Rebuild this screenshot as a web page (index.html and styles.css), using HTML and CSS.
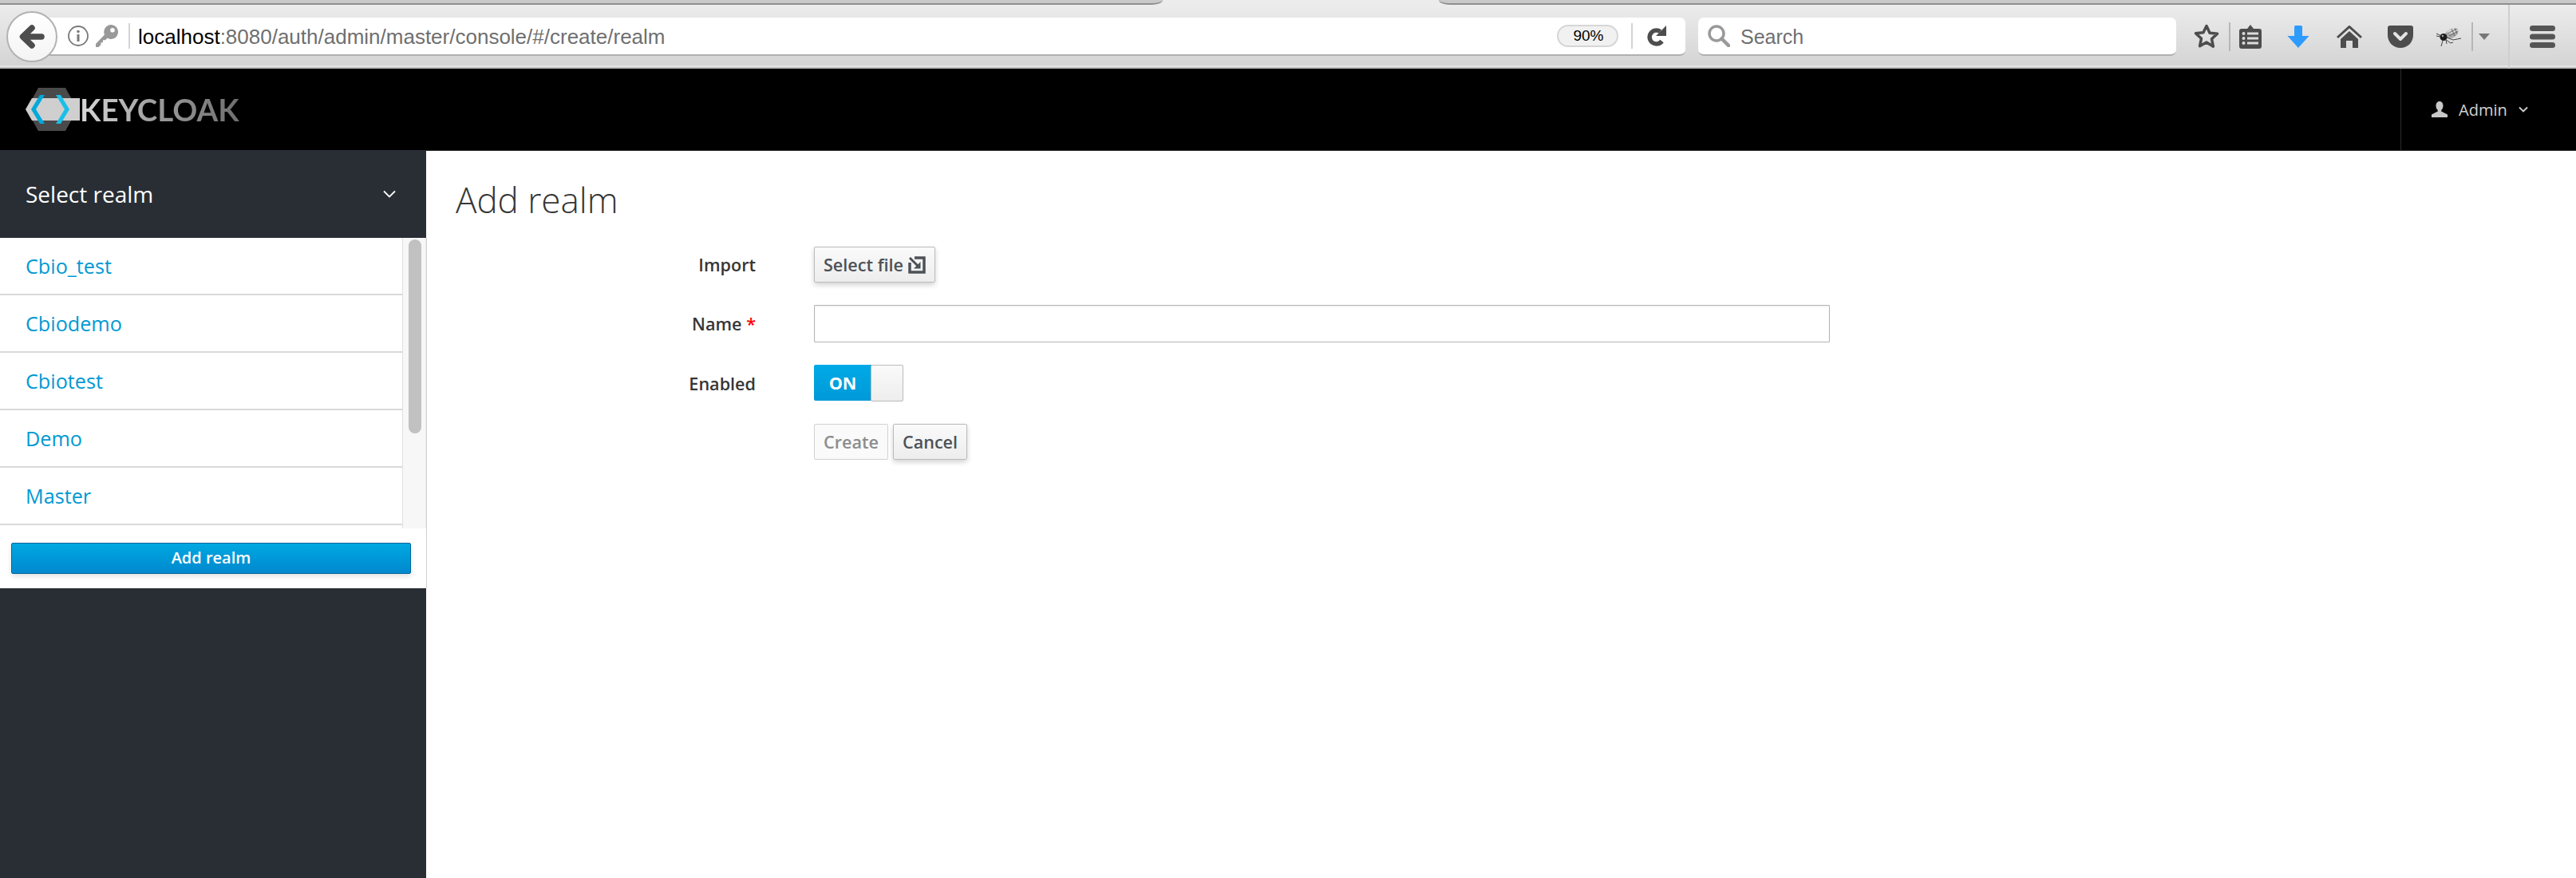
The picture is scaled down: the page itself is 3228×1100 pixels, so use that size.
FILE: index.html
```html
<!DOCTYPE html>
<html lang="en">
<head>
<meta charset="utf-8">
<title>Keycloak - Add realm</title>
<link rel="stylesheet" href="styles.css">
</head>
<body>
<div class="app">
  <div class="tabstrip"><div class="tab tab-left"></div><div class="tab tab-right"></div></div>
  <div class="toolbar">
    <div class="back"><svg width="60" height="60" viewBox="2 2 60 60"><path d="M44 32H24M32 21 20.500 32 32 43" fill="none" stroke="#4d4d4d" stroke-width="7.500" stroke-linecap="round" stroke-linejoin="round"/></svg></div>
    <div class="urlbar">
      <svg class="i-info" width="26" height="26" viewBox="0 0 26 26"><circle cx="13" cy="13" r="12" fill="none" stroke="#7a7a7a" stroke-width="1.800"/><circle cx="13" cy="7.500" r="1.800" fill="#7a7a7a"/><rect x="11.500" y="11" width="3" height="9" fill="#7a7a7a"/></svg>
      <svg class="i-key" width="28" height="28" viewBox="0 0 28 28"><path d="M19 0a9 9 0 1 1-4.500 16.800L12 19.300H9v3H6.500V25L3.500 28H0v-4L11 12.600A9 9 0 0 1 19 0zm2 4a2.800 2.800 0 1 0 0 5.600 2.800 2.800 0 0 0 0-5.600z" fill="#999" fill-rule="evenodd"/></svg>
      <span class="url-sep"></span>
      <span class="url-text"><span class="url-host">localhost</span>:8080/auth/admin/master/console/#/create/realm</span>
      <span class="zoom-badge">90%</span>
      <span class="url-sep sep-right"></span>
      <svg class="i-reload" width="26" height="26" viewBox="0 0 26 26"><path d="M16.500 7.500A8.500 8.500 0 1 0 18.500 19.500" fill="none" stroke="#4d4d4d" stroke-width="5.500"/><path d="M24 0v13H11z" fill="#4d4d4d"/></svg>
    </div>
    <div class="searchbar">
      <svg width="28" height="28" viewBox="0 0 28 28"><circle cx="11" cy="11" r="9" fill="none" stroke="#999" stroke-width="3.500"/><path d="M17.500 17.500 26 26" stroke="#999" stroke-width="4.500" stroke-linecap="round"/></svg>
      <span class="search-text">Search</span>
    </div>
    <svg class="tb-star" width="32" height="32" viewBox="0 0 32 32"><path d="M16 2.500l4 8.700 9.500 1.100-7 6.500 1.900 9.400L16 23l-8.400 4.700 1.900-9.400-7-6.500 9.500-1.100z" fill="none" stroke="#4d4d4d" stroke-width="3.500" stroke-linejoin="round"/></svg>
    <span class="tb-sep sep-star"></span>
    <svg class="tb-library" width="28" height="30" viewBox="0 0 28 30"><path d="M3 5h7l4-5 4 5h7a3 3 0 0 1 3 3v19a3 3 0 0 1-3 3H3a3 3 0 0 1-3-3V8a3 3 0 0 1 3-3z" fill="#4d4d4d"/><path d="M10 9.500h14v3H10zM10 15.500h14v3H10zM10 21.500h14v3H10z" fill="#dcdcdc"/><circle cx="5.500" cy="11" r="2" fill="#dcdcdc"/><circle cx="5.500" cy="17" r="2" fill="#dcdcdc"/><circle cx="5.500" cy="23" r="2" fill="#dcdcdc"/></svg>
    <svg class="tb-download" width="28" height="28" viewBox="0 0 28 28"><path d="M9 1.500A1.500 1.500 0 0 1 10.500 0h7A1.500 1.500 0 0 1 19 1.500V13h8.500L14 28 .5 13H9z" fill="#2e9bff"/></svg>
    <svg class="tb-home" width="32" height="28" viewBox="0 0 32 28"><path d="M1 15 16 1.500 31 15" fill="none" stroke="#4d4d4d" stroke-width="3"/><path d="M16 7 27 17v11h-7v-9h-8v9H5V17z" fill="#4d4d4d"/></svg>
    <svg class="tb-pocket" width="32" height="28" viewBox="0 0 32 28"><path d="M3 0h26a3 3 0 0 1 3 3v9c0 9-7 16-16 16S0 21 0 12V3a3 3 0 0 1 3-3z" fill="#4d4d4d"/><path d="M9 10l7 7 7-7" fill="none" stroke="#e4e4e4" stroke-width="4" stroke-linecap="round" stroke-linejoin="round"/></svg>
    <svg class="tb-bug" width="32" height="26" viewBox="0 0 32 26"><ellipse cx="19" cy="9" rx="9" ry="5.500" fill="#a8a8a8" transform="rotate(-25 19 9)"/><ellipse cx="21" cy="6" rx="8" ry="3" fill="#d4d4d4" transform="rotate(-10 21 6)"/><path d="M14 9 26 3M16 12 27 6M19 3l4 9M23 2l3 7" stroke="#555" stroke-width=".8" fill="none"/><ellipse cx="9" cy="13.500" rx="4.500" ry="4.500" fill="#1c1c1c"/><circle cx="8" cy="12" r="1.200" fill="#aaa"/><path d="M0 9 6 12M0 12l5 1M8 18 6 25M12 17l1 5M13 14l8 3 10-2M11 16l7 5 3-1" fill="none" stroke="#333" stroke-width=".9"/></svg>
    <span class="tb-sep sep-bug"></span>
    <svg class="tb-caret" width="14" height="8" viewBox="0 0 14 8"><path d="M0 0h14L7 8z" fill="#777"/></svg>
    <span class="tb-divider"></span>
    <svg class="tb-menu" width="32" height="28" viewBox="0 0 32 28"><rect y="0" width="32" height="7" rx="3.500" fill="#555"/><rect y="10.500" width="32" height="7" rx="3.500" fill="#555"/><rect y="21" width="32" height="7" rx="3.500" fill="#555"/></svg>
  </div>
  <header class="topnav">
    <div class="logo">
      <svg class="logo-mark" width="68" height="54" viewBox="0 0 68 54"><path d="M16 0H50L65 27 50 54H16L1 27z" fill="#4a4a4a"/><path d="M0 27 8 13H68V41H8z" fill="#cfcfcf"/><path d="M24 9 13 27 24 45h-6L7 27 18 9z" fill="#00a9d8"/><path d="M38 9h6L55 27 44 45h-6L49 27z" fill="#19bfe8"/></svg>
      <span class="logo-text">KEYCLOAK</span>
    </div>
    <div class="user">
      <svg width="20" height="20" viewBox="0 0 20 20"><path d="M10 0c3 0 4.500 2.500 4.500 5.500 0 2.300-1 4.300-2.300 5.400v1.700L20 16.500V20H0v-3.500l7.800-3.900v-1.700C6.500 9.800 5.500 7.800 5.500 5.500 5.500 2.500 7 0 10 0z" fill="#c8c8c8"/></svg>
      <span class="user-name">Admin</span>
      <svg width="12" height="8" viewBox="0 0 12 8"><path d="M1 1.500 6 6.500 11 1.500" fill="none" stroke="#d1d1d1" stroke-width="1.800"/></svg>
    </div>
  </header>
  <div class="main">
    <aside class="sidebar">
      <div class="realm-head">
        <span>Select realm</span>
        <svg width="16" height="10" viewBox="0 0 16 10"><path d="M1 1.500 8 8.500 15 1.500" fill="none" stroke="#fff" stroke-width="1.800"/></svg>
      </div>
      <div class="realm-panel">
        <div class="realm-scroll">
          <ul class="realm-list">
            <li><a href="#">Cbio_test</a></li>
            <li><a href="#">Cbiodemo</a></li>
            <li><a href="#">Cbiotest</a></li>
            <li><a href="#">Demo</a></li>
            <li><a href="#">Master</a></li>
          </ul>
          <div class="scrolltrack"><div class="scrollthumb"></div></div>
        </div>
        <div class="add-wrap"><button class="btn-primary" type="button">Add realm</button></div>
      </div>
    </aside>
    <main class="content">
      <h1>Add realm</h1>
      <form class="form">
        <label class="form-label">Import</label>
        <div class="form-field"><button class="btn" type="button">Select file <svg class="file-icon" width="22" height="22" viewBox="0 0 22 22"><path d="M8 2H20V20H2V8" fill="none" stroke="#4d5258" stroke-width="3.500"/><path d="M2 2 13.500 13.500" stroke="#4d5258" stroke-width="3"/><path d="M15.500 7V15.500H7z" fill="#4d5258"/></svg></button></div>
        <label class="form-label">Name <span class="req">*</span></label>
        <div class="form-field"><input class="input" type="text" aria-label="Name"></div>
        <label class="form-label">Enabled</label>
        <div class="form-field"><div class="toggle"><span class="toggle-on">ON</span><span class="toggle-handle"></span></div></div>
        <div class="form-actions">
          <button class="btn btn-disabled" type="button">Create</button>
          <button class="btn" type="button">Cancel</button>
        </div>
      </form>
    </main>
  </div>
</div>
</body>
</html>
```
FILE: styles.css
```css
* { box-sizing: border-box; }
html, body { margin: 0; padding: 0; }
body { background: #fff; font-family: "Open Sans", "Noto Sans", sans-serif; color: #363636; }
svg { display: block; flex: none; }
.app { height: 1100px; display: flex; flex-direction: column; overflow: hidden; }

.tabstrip { height: 6px; display: flex; justify-content: space-between; background: #ececec; flex: none; }
.tab { height: 6px; background: #c9c9c9; border-bottom: 2px solid #8f8f8f; }
.tab-left { width: 1457px; border-bottom-right-radius: 14px 6px; }
.tab-right { width: 1425px; border-bottom-left-radius: 14px 6px; }

.toolbar { height: 80px; flex: none; display: flex; align-items: center; padding-left: 8px;
  background: linear-gradient(#ececec, #d3d3d3);
  box-shadow: inset 0 -2px 0 #bdbdbd, inset 0 -4px 0 #e4e4e4; }
.back { width: 64px; height: 64px; border-radius: 50%; background: linear-gradient(#fff, #f4f4f4); border: 2px solid #b2b2b2; position: relative; z-index: 1; flex: none; }
.urlbar { width: 2052px; height: 48px; margin-left: -12px; background: #fff; border-bottom: 2px solid #b0b0b0; border-radius: 0 7px 7px 0; display: flex; align-items: center; flex: none; }
.i-info { margin-left: 25px; }
.i-key { margin-left: 9px; }
.url-sep { width: 2px; height: 32px; background: #d4d4d4; margin-left: 13px; flex: none; }
.url-text { margin-left: 10px; padding-top: 2px; font-family: "Liberation Sans", Arial, sans-serif; font-size: 26px; color: #6f6f6f; white-space: nowrap; }
.url-host { color: #000; }
.zoom-badge { margin-left: auto; width: 77px; height: 28px; padding-left: 2px; border-radius: 14px; background: #f1f1f1; border: 2px solid #d6d6d6; font-family: "Liberation Sans", Arial, sans-serif; font-size: 19px; color: #000; display: flex; align-items: center; justify-content: center; }
.sep-right { margin-left: 16px; }
.i-reload { margin-left: 18px; margin-right: 22px; }
.searchbar { width: 599px; height: 48px; margin-left: 16px; background: #fff; border-bottom: 2px solid #b0b0b0; border-radius: 7px; display: flex; align-items: center; padding-left: 12px; flex: none; }
.search-text { margin-left: 13px; padding-top: 3px; font-family: "Liberation Sans", Arial, sans-serif; font-size: 25px; color: #6f6f6f; }
.tb-star { margin-left: 22px; }
.tb-sep { width: 2px; height: 36px; background: #b6b6b6; flex: none; }
.sep-star { margin-left: 12px; }
.tb-library { margin-left: 11px; }
.tb-download { margin-left: 32px; }
.tb-home { margin-left: 34px; }
.tb-pocket { margin-left: 32px; }
.tb-bug { margin-left: 29px; }
.sep-bug { margin-left: 12px; }
.tb-caret { margin-left: 7px; }
.tb-divider { width: 2px; height: 80px; margin-left: 23px; background: #cfcfcf; flex: none; }
.tb-menu { margin-left: 25px; }

.topnav { height: 102px; flex: none; background: #000; display: flex; align-items: center; justify-content: space-between; padding-left: 32px; }
.logo { display: flex; align-items: center; filter: blur(.6px); }
.logo-text { font-family: "Lato", "Open Sans", sans-serif; font-weight: 700; font-size: 38.500px; line-height: 40px; background: linear-gradient(90deg, #d8d8d8, #9a9a9a 50%, #6e6e6e); -webkit-background-clip: text; background-clip: text; color: transparent; }
.user { width: 220px; height: 102px; border-left: 1px solid #2b2b2b; padding-left: 38px; display: flex; align-items: center; color: #d1d1d1; }
.user-name { margin-left: 14px; margin-right: 14px; font-size: 20px; }

.main { flex: 1; display: flex; min-height: 0; }
.sidebar { width: 534px; flex: none; background: #292e34; }
.realm-head { height: 110px; display: flex; align-items: center; justify-content: space-between; padding: 0 38px 0 32px; color: #fff; font-size: 28px; }
.realm-panel { background: #fff; box-shadow: 1px 0 0 #d1d1d1; }
.realm-scroll { height: 364px; display: flex; overflow: hidden; }
.realm-list { width: 505px; margin: 0; padding: 0; list-style: none; border-right: 1px solid #e0e0e0; }
.realm-list li { height: 72px; border-bottom: 2px solid #d9d9d9; display: flex; align-items: center; padding-left: 32px; font-size: 25.200px; }
.realm-list a { color: #0099d3; text-decoration: none; }
.scrolltrack { flex: 1; background: #f7f7f7; border-right: 1px solid #ececec; padding: 2px 5px 0 7px; }
.scrollthumb { height: 243px; border-radius: 8px; background: #c1c1c1; }
.add-wrap { height: 75px; padding: 18px 19px 0 14px; }
.btn-primary { display: block; width: 100%; height: 39px; border: 1px solid #00659c; border-radius: 2px; background: linear-gradient(#00a8e1, #0088ce); color: #fff; font: 600 20px/34px "Open Sans", sans-serif; box-shadow: 0 3px 6px rgba(0, 0, 0, .12); padding: 0 0 2px; }

.content { flex: 1; padding-left: 37px; border-top: 1px solid #222; }
h1 { margin: 32px 0 30px; font-weight: 300; font-size: 44px; line-height: 58px; color: #363636; }
.form { margin-left: -1px; display: grid; grid-template-columns: 377px 1273px; column-gap: 73px; row-gap: 28px; align-items: center; }
.form-label { text-align: right; font-size: 21.600px; font-weight: 600; color: #363636; }
.req { color: #f00; }
.form-field { display: flex; align-items: center; }
.btn { height: 45px; padding: 0 11px; border: 1px solid #bbb; border-radius: 2px; background: linear-gradient(#fafafa, #ededed); color: #4d5258; font: 600 21.600px "Open Sans", sans-serif; box-shadow: 0 3px 6px rgba(0, 0, 0, .18); display: inline-flex; align-items: center; gap: 6px; }
.btn-disabled { background: #fafafa; border-color: #d1d1d1; color: #8b8d8f; box-shadow: none; }
.input { width: 1273px; height: 47px; border: 1px solid #b5b5b5; border-radius: 1px; background: #fff; padding: 0 12px; box-shadow: inset 0 1px 2px rgba(0, 0, 0, .08); }
.toggle { width: 112px; height: 46px; display: flex; }
.toggle-on { width: 72px; height: 45px; border-radius: 2px 0 0 2px; background: linear-gradient(#00aae6, #0099d8); color: #fff; font-size: 21.600px; font-weight: 700; display: flex; align-items: center; justify-content: center; }
.toggle-handle { width: 41px; margin-left: -1px; height: 46px; border: 1px solid #bbb; border-radius: 2px; background: linear-gradient(#fafafa, #ededed); }
.form-actions { grid-column: 2; display: flex; gap: 6px; }
```
